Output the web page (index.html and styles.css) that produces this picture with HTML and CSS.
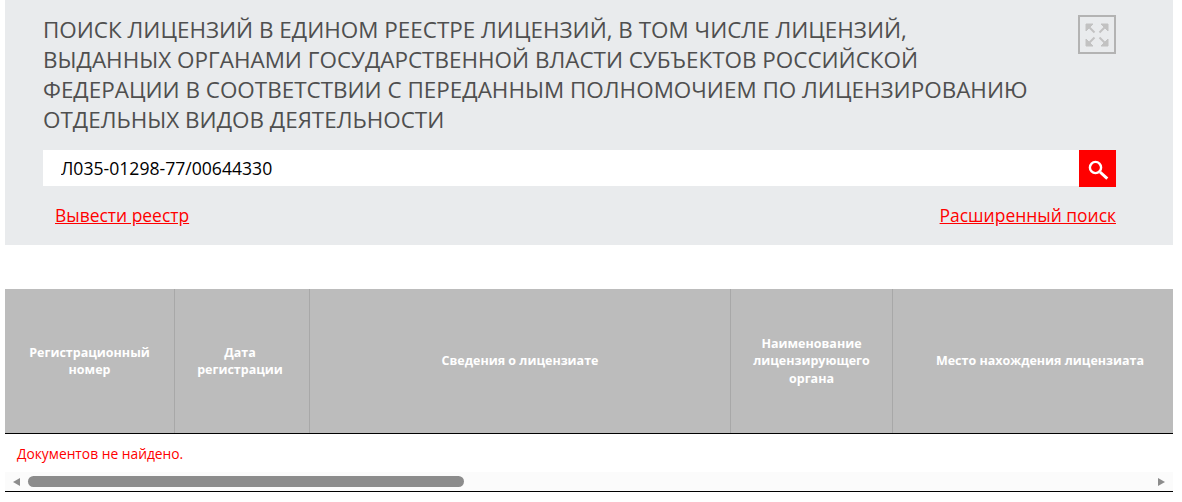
FILE: index.html
```html
<!DOCTYPE html>
<html lang="ru">
<head>
<meta charset="utf-8">
<title>Поиск лицензий</title>
<link rel="stylesheet" href="styles.css">
</head>
<body>
<section class="panel">
  <div class="head">
    <h1 class="title">Поиск лицензий в едином реестре лицензий, в том числе лицензий, выданных органами государственной власти субъектов Российской Федерации в соответствии с переданным полномочием по лицензированию отдельных видов деятельности</h1>
    <button class="expand" aria-label="Развернуть">
      <svg width="24" height="24" viewBox="0 0 24 24" fill="#c2c2c2" stroke="#c2c2c2" stroke-width="2">
        <path d="M1 1H8L1 8Z" stroke-width="1"/>
        <path d="M3 3L9.5 9.5" />
        <path d="M23 1H16L23 8Z" stroke-width="1"/>
        <path d="M21 3L14.5 9.5" />
        <path d="M1 23H8L1 16Z" stroke-width="1"/>
        <path d="M3 21L9.5 14.5" />
        <path d="M23 23H16L23 16Z" stroke-width="1"/>
        <path d="M21 21L14.5 14.5" />
      </svg>
    </button>
  </div>
  <form class="search">
    <input class="query" type="text" value="Л035-01298-77/00644330">
    <button class="go" type="button" aria-label="Найти">
      <svg width="22" height="22" viewBox="0 0 22 22" fill="none" stroke="#fff">
        <circle cx="8.5" cy="9.5" r="5.6" stroke-width="2.4"/>
        <path d="M13 14L20.3 20.6" stroke-width="3"/>
      </svg>
    </button>
  </form>
  <div class="links">
    <a href="#">Вывести реестр</a>
    <a href="#">Расширенный поиск</a>
  </div>
</section>
<section class="results">
  <div class="thead">
    <div class="th">Регистрационный номер</div>
    <div class="th th-date">Дата регистрации</div>
    <div class="th">Сведения о лицензиате</div>
    <div class="th">Наименование лицензирующего органа</div>
    <div class="th th-last">Место нахождения лицензиата</div>
  </div>
  <p class="empty">Документов не найдено.</p>
  <div class="scrollbar">
    <span class="arrow left"></span>
    <div class="track"><div class="thumb"></div></div>
    <span class="arrow right"></span>
  </div>
</section>
</body>
</html>
```
FILE: styles.css
```css
* { box-sizing: border-box; }
html, body { height: 100%; }
body {
  margin: 0;
  padding: 0 9px 0 5px;
  background: #fff;
  font-family: "Open Sans", "Liberation Sans", sans-serif;
  overflow: hidden;
}
.panel {
  height: 245px;
  background: #e9ebed;
  padding: 15px 57px 0 38px;
}
.head { display: flex; justify-content: space-between; align-items: flex-start; }
.title {
  margin: 0;
  width: 990px;
  font-size: 22.46px;
  line-height: 30px;
  font-weight: 400;
  color: #4f4f4f;
  text-transform: uppercase;
}
.expand {
  width: 38px;
  height: 39px;
  padding: 0;
  display: flex;
  align-items: center;
  justify-content: center;
  background: transparent;
  border: 2px solid #b3b3b3;
}
.search { display: flex; height: 36px; margin-top: 15px; }
.query {
  flex: 1;
  min-width: 0;
  height: 36px;
  border: 0;
  outline: 0;
  background: #fff;
  padding: 0 18px;
  font-family: inherit;
  font-size: 17.6px;
  color: #000;
}
.go {
  width: 37px;
  height: 37px;
  padding: 0;
  border: 0;
  background: #f00;
  display: flex;
  align-items: center;
  justify-content: center;
}
.links {
  display: flex;
  justify-content: space-between;
  margin-top: 17px;
  padding-left: 12px;
  font-size: 17.45px;
  line-height: 25px;
}
.links a { color: #f00; text-decoration: underline; }
.results { margin-top: 44px; }
.thead {
  display: grid;
  grid-template-columns: 170px 135px 421px 162px 1fr;
  height: 145px;
  background: #bcbcbc;
  border-bottom: 1px solid #000;
}
.th {
  display: flex;
  align-items: center;
  justify-content: center;
  text-align: center;
  padding: 0 12px;
  border-right: 1px solid #a8a8a8;
  color: #fff;
  font-size: 12.5px;
  line-height: 17.4px;
  font-weight: 700;
}
.th-date { padding: 0 15px 0 11px; }
.th-last { border-right: 0; padding: 0 0 0 14px; }
.empty {
  margin: 0;
  height: 38px;
  padding: 10px 12px 0;
  font-size: 13.8px;
  line-height: 19px;
  color: #f00;
}
.scrollbar {
  display: flex;
  align-items: center;
  height: 20px;
  background: #fbfbfb;
  border-bottom: 1px solid #000;
}
.track { flex: 1; height: 11px; }
.thumb { width: 436px; height: 11px; border-radius: 6px; background: #8c8c8c; margin-left: 1px; }
.arrow { width: 0; height: 0; border-top: 4.5px solid transparent; border-bottom: 4.5px solid transparent; }
.arrow.left { margin: 0 7px 0 8px; border-right: 7px solid #8c8c8c; }
.arrow.right { margin: 0 8px 0 7px; border-left: 7px solid #8c8c8c; }
```
